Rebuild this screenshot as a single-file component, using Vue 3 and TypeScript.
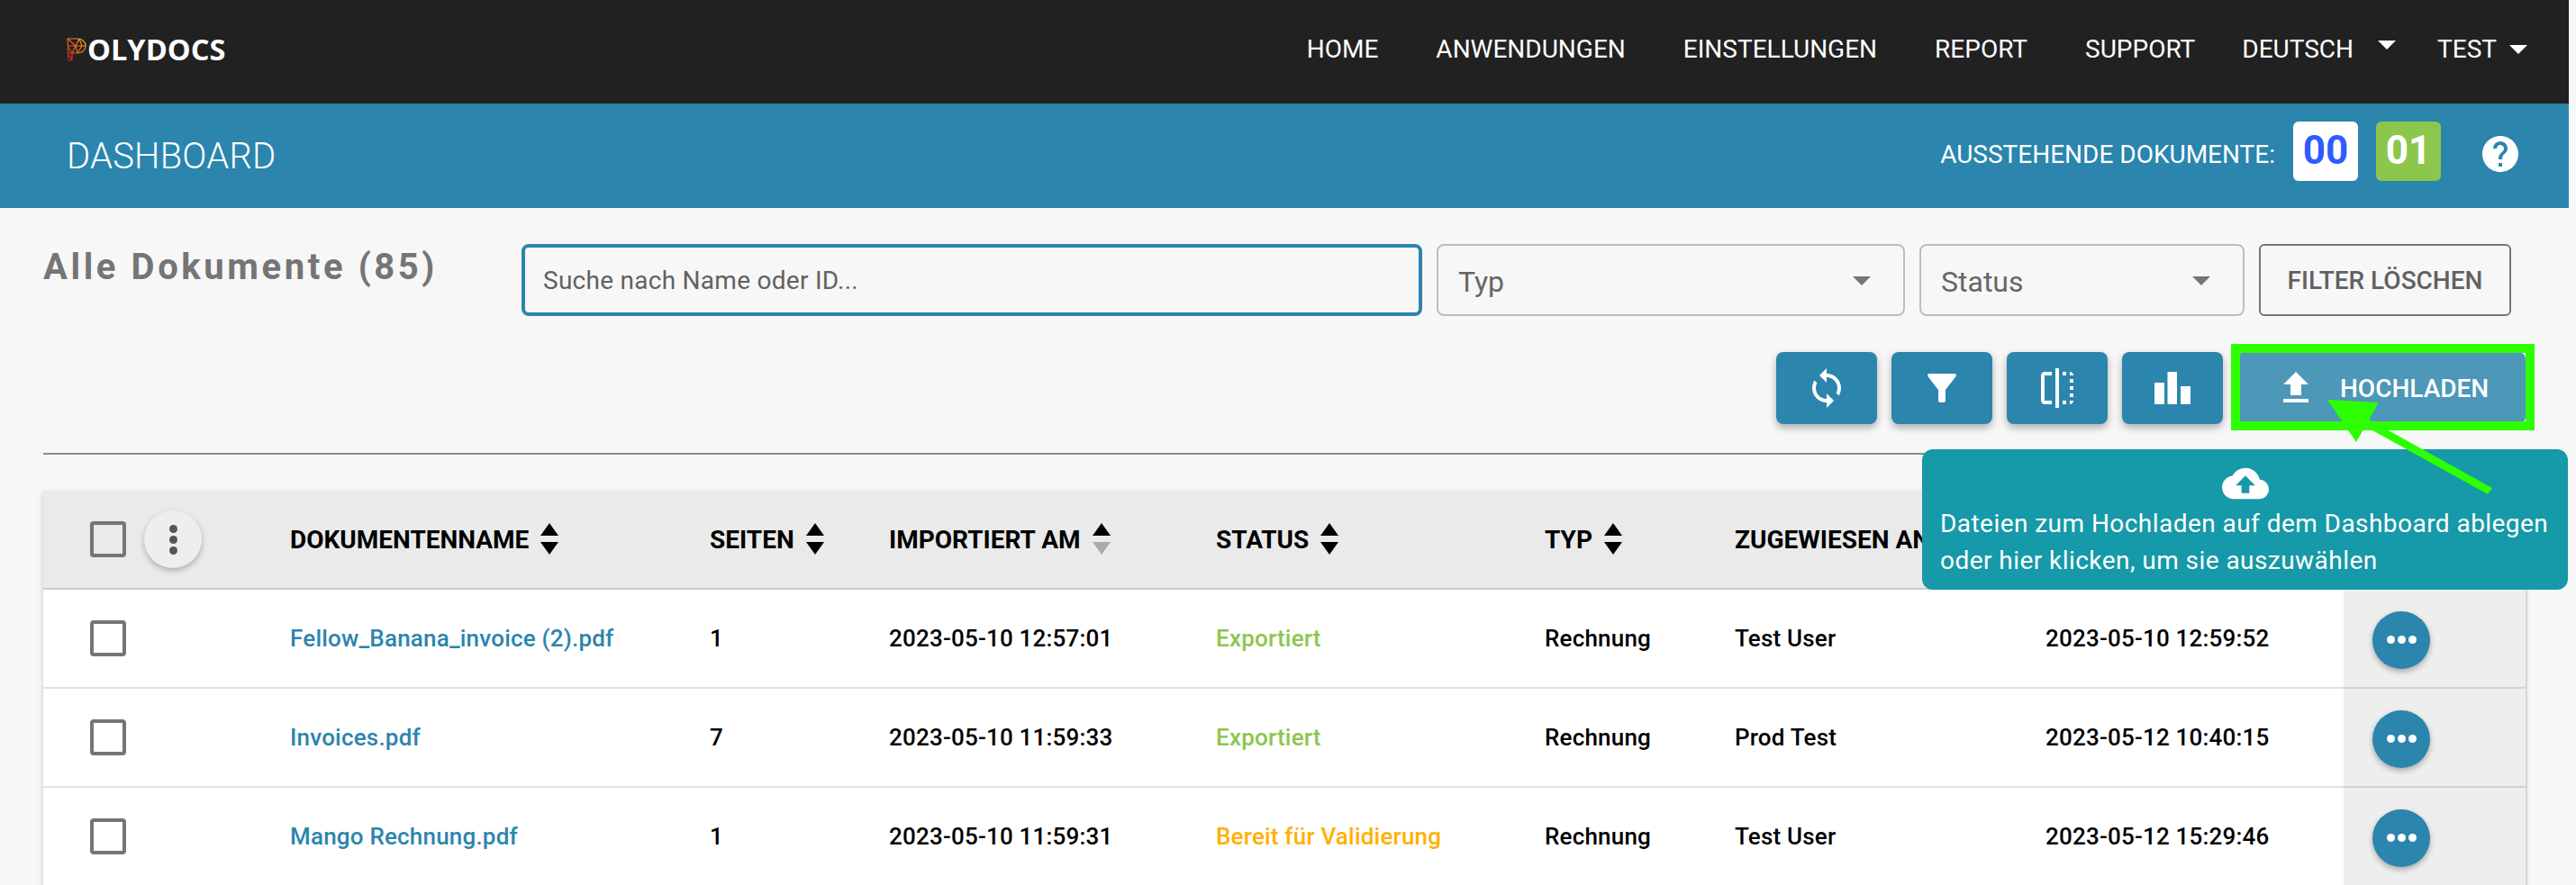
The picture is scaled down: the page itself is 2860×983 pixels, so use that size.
<script setup lang="ts">
interface Doc {
  name: string
  pages: number
  imported: string
  status: string
  statusClass: string
  type: string
  assignee: string
  changed: string
}

const navLinks = ['HOME', 'ANWENDUNGEN', 'EINSTELLUNGEN', 'REPORT', 'SUPPORT']

const columns = [
  { label: 'DOKUMENTENNAME', sort: true },
  { label: 'SEITEN', sort: true },
  { label: 'IMPORTIERT AM', sort: true, active: true },
  { label: 'STATUS', sort: true },
  { label: 'TYP', sort: true },
  { label: 'ZUGEWIESEN AN', sort: false },
  { label: '', sort: false },
]

const docs: Doc[] = [
  {
    name: 'Fellow_Banana_invoice (2).pdf',
    pages: 1,
    imported: '2023-05-10 12:57:01',
    status: 'Exportiert',
    statusClass: 'done',
    type: 'Rechnung',
    assignee: 'Test User',
    changed: '2023-05-10 12:59:52',
  },
  {
    name: 'Invoices.pdf',
    pages: 7,
    imported: '2023-05-10 11:59:33',
    status: 'Exportiert',
    statusClass: 'done',
    type: 'Rechnung',
    assignee: 'Prod Test',
    changed: '2023-05-12 10:40:15',
  },
  {
    name: 'Mango Rechnung.pdf',
    pages: 1,
    imported: '2023-05-10 11:59:31',
    status: 'Bereit für Validierung',
    statusClass: 'ready',
    type: 'Rechnung',
    assignee: 'Test User',
    changed: '2023-05-12 15:29:46',
  },
]
</script>

<template>
  <div class="page">
    <header class="navbar">
      <div class="logo">
        <svg class="logo-mark" width="22" height="26" viewBox="0 0 22 26" fill="none" stroke-width="1.2">
          <defs>
            <linearGradient id="logoGrad" x1="1" y1="0" x2="0" y2="1">
              <stop offset="0" stop-color="#ffb020" />
              <stop offset="0.55" stop-color="#e8641a" />
              <stop offset="1" stop-color="#c8101c" />
            </linearGradient>
          </defs>
          <path stroke="url(#logoGrad)" d="M1 1h11c5 0 9 3.500 9 8s-4 8-9 8H6v8H2L1 1zM1 1l9 8 11 0M1 9h9l2 8M10 9l4-8M1 9l5 8M1 17h5M1 17l5 8M10 9l-4 8M14 1l3 8 -5 8" />
        </svg>
        <span>OLYDOCS</span>
      </div>
      <nav class="nav-links">
        <a v-for="link in navLinks" :key="link" class="nav-link">{{ link }}</a>
        <a class="nav-link lang">DEUTSCH<i class="nav-caret lang-caret" /></a>
        <a class="nav-link user">TEST<i class="nav-caret" /></a>
      </nav>
    </header>

    <section class="subbar">
      <h1>DASHBOARD</h1>
      <div class="pending">
        <span class="pending-label">AUSSTEHENDE DOKUMENTE:</span>
        <span class="badge badge-blue">00</span>
        <span class="badge badge-green">01</span>
        <!-- material: help -->
        <svg class="help" width="48" height="48" viewBox="0 0 24 24" fill="#fff">
          <path d="M12 2C6.48 2 2 6.48 2 12s4.48 10 10 10 10-4.480 10-10S17.520 2 12 2zm1 17h-2v-2h2v2zm2.070-7.750l-.9.920C13.450 12.900 13 13.500 13 15h-2v-.5c0-1.100.45-2.100 1.170-2.830l1.240-1.260c.37-.36.59-.86.59-1.410 0-1.100-.9-2-2-2s-2 .9-2 2H8c0-2.210 1.790-4 4-4s4 1.790 4 4c0 .88-.36 1.680-.93 2.250z" />
        </svg>
      </div>
    </section>

    <main class="content">
      <div class="filters">
        <h2 class="title">Alle Dokumente (85)</h2>
        <div class="search">Suche nach Name oder ID...</div>
        <div class="select select-type">Typ<i class="select-caret" /></div>
        <div class="select select-status">Status<i class="select-caret" /></div>
        <button type="button" class="clear-btn">FILTER LÖSCHEN</button>
      </div>

      <div class="toolbar">
        <button type="button" class="tool-btn">
          <!-- material: sync -->
          <svg width="48" height="48" viewBox="0 0 24 24" fill="#fff">
            <path d="M12 4V1L8 5l4 4V6c3.310 0 6 2.690 6 6 0 1.010-.25 1.970-.7 2.800l1.460 1.460C19.540 15.030 20 13.570 20 12c0-4.420-3.580-8-8-8zm0 14c-3.310 0-6-2.690-6-6 0-1.010.25-1.970.7-2.800L5.240 7.740C4.460 8.970 4 10.430 4 12c0 4.420 3.580 8 8 8v3l4-4-4-4v3z" />
          </svg>
        </button>
        <button type="button" class="tool-btn">
          <!-- material: filter_alt -->
          <svg width="48" height="48" viewBox="0 0 24 24" fill="#fff">
            <path d="M4.250 5.610C6.270 8.200 10 13 10 13v6c0 .55.45 1 1 1h2c.55 0 1-.45 1-1v-6s3.720-4.800 5.740-7.390c.51-.66.04-1.610-.79-1.610H5.040c-.83 0-1.300.95-.79 1.610z" />
          </svg>
        </button>
        <button type="button" class="tool-btn">
          <!-- material: flip -->
          <svg width="48" height="48" viewBox="0 0 24 24" fill="#fff">
            <path d="M15 21h2v-2h-2v2zm4-12h2V7h-2v2zM3 5v14c0 1.100.9 2 2 2h4v-2H5V5h4V3H5c-1.100 0-2 .9-2 2zm16-2v2h2c0-1.100-.9-2-2-2zm-8 20h2V1h-2v22zm8-6h2v-2h-2v2zM15 5h2V3h-2v2zm4 8h2v-2h-2v2zm0 8c1.100 0 2-.9 2-2h-2v2z" />
          </svg>
        </button>
        <button type="button" class="tool-btn">
          <svg width="48" height="48" viewBox="0 0 48 48" fill="#fff">
            <path d="M4 18h11v24H4zM18.500 6H29v36H18.500zM33 22h11v20H33z" />
          </svg>
        </button>

        <div class="upload-wrap">
          <button type="button" class="upload-btn">
            <!-- material: file_upload -->
            <svg width="48" height="48" viewBox="0 0 24 24" fill="#fff">
              <path d="M9 16h6v-6h4l-7-7-7 7h4zm-4 2h14v2H5z" />
            </svg>
            <span>HOCHLADEN</span>
          </button>
          <div class="upload-tip">
            <!-- material: cloud_upload -->
            <svg class="tip-icon" width="52" height="52" viewBox="0 0 24 24" fill="#fff">
              <path d="M19.350 10.040C18.670 6.590 15.640 4 12 4 9.110 4 6.600 5.640 5.350 8.040 2.340 8.360 0 10.910 0 14c0 3.310 2.690 6 6 6h13c2.760 0 5-2.240 5-5 0-2.640-2.050-4.780-4.650-4.960zM14 13v4h-4v-4H7l5-5 5 5h-3z" />
            </svg>
            <p>Dateien zum Hochladen auf dem Dashboard ablegen<br>oder hier klicken, um sie auszuwählen</p>
          </div>
          <div class="highlight" />
          <svg class="arrow" width="200" height="115" viewBox="0 0 200 115" fill="#2eff00">
            <path d="M4 4L61 7 36 51zM50 26L187 102 182 109 45 33z" />
          </svg>
        </div>
      </div>

      <hr class="divider">

      <table class="docs">
        <colgroup>
          <col class="col-check">
          <col class="col-name">
          <col class="col-pages">
          <col class="col-date">
          <col class="col-status">
          <col class="col-type">
          <col class="col-user">
          <col class="col-changed">
          <col class="col-action">
        </colgroup>
        <thead>
          <tr>
            <th class="check-cell">
              <div class="check-head">
                <span class="checkbox" />
                <button type="button" class="kebab">
                  <i /><i /><i />
                </button>
              </div>
            </th>
            <th v-for="col in columns" :key="col.label">
              <div class="head-label">
                {{ col.label }}
                <svg v-if="col.sort" class="sort" width="20" height="36" viewBox="0 0 20 36">
                  <path d="M10 0l10 14H0z" fill="#000" />
                  <path d="M10 35L0 21h20z" :fill="col.active ? '#aaa' : '#000'" />
                </svg>
              </div>
            </th>
            <th class="action-cell head-action" />
          </tr>
        </thead>
        <tbody>
          <tr v-for="doc in docs" :key="doc.name">
            <td class="check-cell"><span class="checkbox" /></td>
            <td><a class="doc-link">{{ doc.name }}</a></td>
            <td>{{ doc.pages }}</td>
            <td>{{ doc.imported }}</td>
            <td :class="doc.statusClass">{{ doc.status }}</td>
            <td>{{ doc.type }}</td>
            <td>{{ doc.assignee }}</td>
            <td>{{ doc.changed }}</td>
            <td class="action-cell">
              <button type="button" class="row-action">
                <i /><i /><i />
              </button>
            </td>
          </tr>
        </tbody>
      </table>
    </main>
  </div>
</template>

<style scoped>
.page {
  position: relative;
  height: 983px;
  overflow: hidden;
  background: #f7f7f7;
  font-family: Roboto, "Liberation Sans", sans-serif;
  color: #000;
}

.navbar {
  width: 2852px;
  height: 115px;
  display: flex;
  align-items: flex-start;
  justify-content: space-between;
  background: #212121;
  color: #fff;
}

.logo {
  display: flex;
  align-items: center;
  gap: 1px;
  margin: 41px 0 0 74px;
  font-family: "Open Sans", sans-serif;
  font-weight: 700;
  font-size: 32.6px;
  line-height: 27px;
}

.logo-mark {
  flex: none;
}

.nav-links {
  display: flex;
  gap: 64px;
  padding: 38px 46px 0 0;
  font-size: 28px;
  line-height: 34px;
}

.nav-link {
  display: flex;
  white-space: nowrap;
}

.lang {
  margin-left: -12px;
  margin-right: -18px;
}

.nav-caret {
  width: 0;
  height: 0;
  margin: 12px 0 0 14px;
  border-left: 10px solid transparent;
  border-right: 10px solid transparent;
  border-top: 10px solid #fff;
}

.lang-caret {
  margin: 7px 0 0 27px;
}

.subbar {
  width: 2852px;
  height: 116px;
  box-sizing: border-box;
  display: flex;
  align-items: center;
  justify-content: space-between;
  padding: 0 52px 0 74px;
  background: #2b85ad;
  color: #fff;
}

.subbar h1 {
  margin: 0;
  font-size: 40px;
  font-weight: 300;
  letter-spacing: 0.2px;
}

.pending {
  display: flex;
  align-items: center;
  margin-top: -4px;
}

.pending-label {
  font-size: 28px;
  margin-right: 20px;
}

.badge {
  width: 72px;
  height: 66px;
  margin-top: -6px;
  padding-bottom: 2px;
  box-sizing: border-box;
  border-radius: 6px;
  display: flex;
  align-items: center;
  justify-content: center;
  font-size: 44px;
  font-weight: 700;
}

.badge-blue {
  background: #fff;
  color: #2f5cff;
  margin-right: 20px;
}

.badge-green {
  background: #8cc64d;
  color: #fff;
  margin-right: 42px;
}

.content {
  width: 2852px;
  box-sizing: border-box;
  padding: 40px 48px 0 48px;
}

.filters {
  display: flex;
  gap: 16px;
  height: 80px;
}

.title {
  width: 515px;
  margin: 0;
  padding-top: 2px;
  box-sizing: border-box;
  font-size: 40px;
  line-height: 48px;
  font-weight: 700;
  letter-spacing: 3.6px;
  color: #757575;
  white-space: nowrap;
}

.search {
  width: 1000px;
  box-sizing: border-box;
  display: flex;
  align-items: center;
  padding-left: 20px;
  border: 4px solid #2b85ad;
  border-radius: 8px;
  font-size: 28px;
  letter-spacing: 0.27px;
  color: #616161;
}

.select {
  position: relative;
  box-sizing: border-box;
  display: flex;
  align-items: center;
  padding: 4px 0 0 22px;
  border: 2px solid #bdbdbd;
  border-radius: 8px;
  font-size: 32px;
  color: #666;
}

.select-type {
  width: 520px;
}

.select-status {
  width: 361px;
}

.select-caret {
  position: absolute;
  right: 36px;
  top: 34px;
  width: 0;
  height: 0;
  border-left: 10px solid transparent;
  border-right: 10px solid transparent;
  border-top: 10px solid #757575;
}

.clear-btn {
  width: 280px;
  border: 2px solid #757575;
  border-radius: 6px;
  background: transparent;
  font-family: inherit;
  font-size: 28px;
  font-weight: 500;
  color: #616161;
  padding: 0;
}

.toolbar {
  display: flex;
  justify-content: flex-end;
  gap: 16px;
  margin-top: 40px;
}

.tool-btn {
  width: 112px;
  height: 80px;
  display: flex;
  align-items: center;
  justify-content: center;
  padding: 0;
  border: none;
  border-radius: 8px;
  background: #2b85ad;
  box-shadow: 0 4px 8px rgba(0, 0, 0, 0.3);
}

.upload-wrap {
  position: relative;
  z-index: 2;
  width: 320px;
  height: 80px;
}

.upload-btn {
  width: 100%;
  height: 100%;
  display: flex;
  align-items: center;
  padding: 0 0 0 41px;
  border: none;
  border-radius: 8px;
  background: #4d97b9;
  color: #fff;
  font-family: inherit;
  font-size: 28px;
  font-weight: 500;
}

.upload-btn span {
  margin-left: 25px;
}

.highlight {
  position: absolute;
  left: -7px;
  top: -9px;
  width: 337px;
  height: 96px;
  box-sizing: border-box;
  border: 10px solid #2eff00;
}

.upload-tip {
  position: absolute;
  left: -350px;
  top: 108px;
  width: 717px;
  height: 156px;
  box-sizing: border-box;
  padding: 12px 20px 0;
  border-radius: 12px;
  background: #1699a8;
  color: #fff;
}

.tip-icon {
  display: block;
  margin: 0 auto;
}

.upload-tip p {
  margin: -2px 0 0;
  font-size: 28px;
  line-height: 41px;
  letter-spacing: 0.45px;
  white-space: nowrap;
}

.arrow {
  position: absolute;
  left: 96px;
  top: 49px;
}

.divider {
  height: 2px;
  margin: 32px 0 40px;
  border: none;
  background: #8a8a8a;
}

.docs {
  width: 2756px;
  table-layout: fixed;
  border-collapse: separate;
  border-spacing: 0;
  background: #fff;
  box-shadow: 0 2px 6px rgba(0, 0, 0, 0.2);
  font-size: 26px;
  font-weight: 500;
  letter-spacing: 0.2px;
}

.col-check { width: 274px; }
.col-name { width: 466px; }
.col-pages { width: 199px; }
.col-date { width: 363px; }
.col-status { width: 365px; }
.col-type { width: 211px; }
.col-user { width: 345px; }
.col-changed { width: 331px; }
.col-action { width: 202px; }

th,
td {
  height: 110px;
  box-sizing: border-box;
  padding: 0;
  text-align: left;
  white-space: nowrap;
  border-bottom: 2px solid #e0e0e0;
}

th {
  background: #eaeaea;
  border-bottom-color: #ccc;
  font-size: 28px;
  font-weight: 700;
  letter-spacing: 0;
}

.head-label {
  display: flex;
  align-items: center;
  gap: 13px;
}

.check-cell {
  padding-left: 52px;
}

.check-head {
  display: flex;
  align-items: center;
  gap: 20px;
}

.checkbox {
  display: block;
  width: 40px;
  height: 40px;
  box-sizing: border-box;
  border: 4px solid #757575;
  border-radius: 4px;
  background: transparent;
}

.kebab {
  width: 64px;
  height: 64px;
  display: flex;
  flex-direction: column;
  align-items: center;
  justify-content: center;
  gap: 3px;
  padding: 0;
  border: none;
  border-radius: 50%;
  background: #eee;
  box-shadow: 0 3px 6px rgba(0, 0, 0, 0.25);
}

.kebab i {
  width: 9px;
  height: 9px;
  border-radius: 50%;
  background: #555;
}

.doc-link {
  color: #2b85ad;
}

.done {
  color: #8cc64d;
}

.ready {
  color: #ffb000;
}

.action-cell {
  padding-left: 32px;
  background: #eee;
  border-bottom-color: #d2d2d2;
  box-shadow: 2px 0 0 #d8d8d8;
}

.head-action {
  background: #eaeaea;
  border-bottom-color: #ccc;
}

.row-action {
  width: 64px;
  height: 64px;
  margin-top: 3px;
  display: flex;
  align-items: center;
  justify-content: center;
  gap: 3px;
  padding: 0;
  border: none;
  border-radius: 50%;
  background: #2b85ad;
  box-shadow: 0 3px 6px rgba(0, 0, 0, 0.3);
}

.row-action i {
  width: 9px;
  height: 9px;
  border-radius: 50%;
  background: #fff;
}
</style>

<style>
html,
body {
  background: #f7f7f7;
}
</style>
